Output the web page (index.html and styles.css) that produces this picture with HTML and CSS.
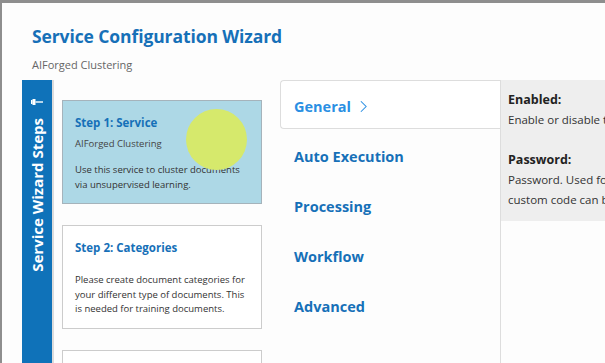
FILE: index.html
```html
<!DOCTYPE html>
<html lang="en">
<head>
    <meta charset="UTF-8">
    <title>Service Configuration Wizard</title>
    <link rel="stylesheet" href="styles.css">
</head>
<body>
    <div class="dialog">
        <div class="header">
            <h1>Service Configuration Wizard</h1>
            <div class="subtitle">AIForged Clustering</div>
        </div>

        <div class="wizard">
            <div class="sidebar">
                <svg class="pin" width="12" height="8" viewBox="0 0 12 8">
                    <rect x="0" y="2" width="1.5" height="4" fill="white"></rect>
                    <rect x="1.5" y="1" width="3" height="6" fill="white"></rect>
                    <rect x="4.5" y="3.3" width="7.5" height="1.4" fill="white"></rect>
                </svg>
                <div class="sidebar-label">Service Wizard Steps</div>
            </div>

            <div class="steps">
                <div class="step active">
                    <div class="step-title">Step 1: Service</div>
                    <div class="step-sub">AIForged Clustering</div>
                    <div class="step-desc">Use this service to cluster documents via unsupervised learning.</div>
                    <div class="cursor-dot"></div>
                </div>
                <div class="step">
                    <div class="step-title">Step 2: Categories</div>
                    <div class="step-desc gap">Please create document categories for your different type of documents. This is needed for training documents.</div>
                </div>
                <div class="step"></div>
            </div>

            <div class="nav">
                <div class="tab selected">General
                    <svg class="chevron" viewBox="0 0 8 14"><polyline points="1 1 7 7 1 13" fill="none" stroke="currentColor" stroke-width="1.2"></polyline></svg>
                </div>
                <div class="tab">Auto Execution</div>
                <div class="tab">Processing</div>
                <div class="tab">Workflow</div>
                <div class="tab">Advanced</div>
            </div>

            <div class="details">
                <div class="help">
                    <div class="help-title">Enabled:</div>
                    <div class="help-text">Enable or disable the service</div>
                    <div class="help-title second">Password:</div>
                    <div class="help-text">Password. Used for encryption,</div>
                    <div class="help-text">custom code can be added here</div>
                </div>
            </div>
        </div>
    </div>
</body>
</html>
```

FILE: styles.css
```css
body {
    margin: 0;
    background-color: #8e8e8e;
    font-family: "Open Sans", Arial, sans-serif;
    overflow: hidden;
}
.dialog {
    margin: 3px 0 0 2px;
    height: 360px;
    background-color: #fdfdfd;
    overflow: hidden;
}
.header {
    padding: 21px 0 0 30px;
    height: 56px;
}
h1 {
    margin: 0;
    font-size: 17.5px;
    font-weight: bold;
    color: #1670b8;
    letter-spacing: -0.1px;
    line-height: 24px;
}
.subtitle {
    margin-top: 9px;
    font-size: 11px;
    color: #666;
}

.wizard {
    display: flex;
    padding-left: 20px;
    height: 283px;
}
.sidebar {
    width: 30px;
    background-color: #0f72b9;
    border-right: 2px solid #dcdcdc;
    flex-shrink: 0;
    display: flex;
    flex-direction: column;
    align-items: center;
}
.pin {
    display: block;
    width: 12px;
    height: 8px;
    flex-shrink: 0;
    margin-top: 18px;
}
.sidebar-label {
    margin-top: 12px;
    writing-mode: vertical-rl;
    transform: rotate(180deg);
    color: white;
    font-weight: bold;
    font-size: 15px;
    white-space: nowrap;
}

.steps {
    width: 226px;
    padding: 20px 0 0 8px;
    box-sizing: border-box;
    flex-shrink: 0;
}
.step {
    position: relative;
    width: 200px;
    height: 104px;
    border: 1px solid #cccccc;
    background-color: white;
    margin-bottom: 21px;
    padding: 0 14px 0 12px;
    box-sizing: border-box;
}
.step.active {
    background-color: #add8e6;
    border-color: #a5b3bb;
}
.step-title {
    margin-top: 14px;
    font-size: 11.5px;
    font-weight: bold;
    color: #1670b8;
}
.step-sub {
    margin-top: 7px;
    font-size: 9.5px;
    color: #444;
}
.step-desc {
    margin-top: 13px;
    font-size: 9.5px;
    line-height: 14.5px;
    color: #333;
}
.step-desc.gap {
    margin-top: 18px;
}
.cursor-dot {
    position: absolute;
    left: 123px;
    top: 8px;
    width: 61px;
    height: 61px;
    border-radius: 50%;
    background-color: #d6e96c;
}

.nav {
    width: 220px;
    flex-shrink: 0;
}
.tab {
    height: 50px;
    display: flex;
    align-items: center;
    padding: 2px 0 0 14px;
    font-size: 14.5px;
    font-weight: bold;
    color: #1670b8;
    box-sizing: border-box;
}
.tab.selected {
    height: 49px;
    margin-bottom: 1px;
    border: 1px solid #dddddd;
    border-right: none;
    border-radius: 4px 0 0 4px;
    padding: 4px 0 0 13px;
    color: #2a8fe3;
    background-color: white;
}
.chevron {
    width: 7px;
    height: 13px;
    margin-left: 9px;
}

.details {
    flex: 1;
    min-width: 0;
    border-left: 1px solid #dddddd;
    white-space: nowrap;
    overflow: hidden;
}
.help {
    background-color: #eeeeee;
    height: 141px;
    padding: 10px 0 0 7px;
    box-sizing: border-box;
}
.help-title {
    font-size: 12.5px;
    line-height: 20px;
    font-weight: bold;
    color: #222;
}
.help-title.second {
    margin-top: 20px;
}
.help-text {
    font-size: 11.5px;
    line-height: 20px;
    color: #333;
}
```
